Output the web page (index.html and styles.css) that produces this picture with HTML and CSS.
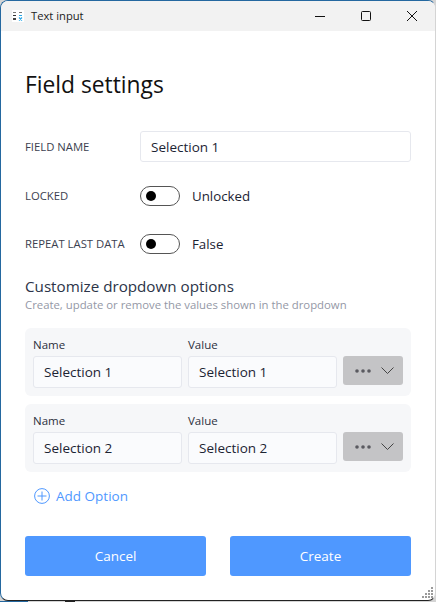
FILE: index.html
```html
<!DOCTYPE html>
<html lang="en">
<head>
  <meta charset="UTF-8">
  <title>Text input</title>
  <link rel="stylesheet" href="styles.css">
</head>
<body>
  <div class="window">

    <!-- Title bar -->
    <header class="titlebar">
      <svg class="app-icon" width="12" height="12" viewBox="0 0 12 12">
        <rect x="1" y="2" width="3" height="1" fill="#777"/>
        <rect x="7" y="2" width="3" height="1" fill="#777"/>
        <rect x="1" y="5" width="3" height="1" fill="#333"/>
        <rect x="7" y="5" width="3" height="1" fill="#29a8e8"/>
        <rect x="1" y="8" width="3" height="2" fill="#444"/>
        <path d="M7 7.5l3 3M10 7.5l-3 3" stroke="#29a8e8" stroke-width="1.2" fill="none"/>
      </svg>
      <span class="window-title">Text input</span>
      <div class="window-controls">
        <svg width="10" height="10" viewBox="0 0 10 10"><path d="M0 5.5h10" stroke="#111" fill="none"/></svg>
        <svg width="10" height="10" viewBox="0 0 10 10"><rect x="0.5" y="0.5" width="9" height="9" rx="1" stroke="#111" fill="none"/></svg>
        <svg width="10" height="10" viewBox="0 0 10 10"><path d="M0 0l10 10M10 0L0 10" stroke="#111" fill="none"/></svg>
      </div>
    </header>

    <main class="content">
      <h1>Field settings</h1>

      <div class="form-row name-row">
        <label class="form-label">FIELD NAME</label>
        <input class="text-field wide" type="text" value="Selection 1">
      </div>

      <div class="form-row locked-row">
        <label class="form-label">LOCKED</label>
        <span class="toggle"></span>
        <span class="toggle-text">Unlocked</span>
      </div>

      <div class="form-row repeat-row">
        <label class="form-label">REPEAT LAST DATA</label>
        <span class="toggle"></span>
        <span class="toggle-text">False</span>
      </div>

      <h2>Customize dropdown options</h2>
      <p class="hint">Create, update or remove the values shown in the dropdown</p>

      <div class="option-card">
        <div class="option-field">
          <label>Name</label>
          <input class="text-field" type="text" value="Selection 1">
        </div>
        <div class="option-field">
          <label>Value</label>
          <input class="text-field" type="text" value="Selection 1">
        </div>
        <button class="more-btn">
          <svg width="16" height="4" viewBox="0 0 16 4"><circle cx="2" cy="2" r="1.8"/><circle cx="8" cy="2" r="1.8"/><circle cx="14" cy="2" r="1.8"/></svg>
          <svg width="13" height="7" viewBox="0 0 13 7"><path d="M0.5 0.5l6 6 6-6" fill="none" stroke="#444" stroke-width="1"/></svg>
        </button>
      </div>

      <div class="option-card">
        <div class="option-field">
          <label>Name</label>
          <input class="text-field" type="text" value="Selection 2">
        </div>
        <div class="option-field">
          <label>Value</label>
          <input class="text-field" type="text" value="Selection 2">
        </div>
        <button class="more-btn">
          <svg width="16" height="4" viewBox="0 0 16 4"><circle cx="2" cy="2" r="1.8"/><circle cx="8" cy="2" r="1.8"/><circle cx="14" cy="2" r="1.8"/></svg>
          <svg width="13" height="7" viewBox="0 0 13 7"><path d="M0.5 0.5l6 6 6-6" fill="none" stroke="#444" stroke-width="1"/></svg>
        </button>
      </div>

      <div class="add-option">
        <svg width="16" height="16" viewBox="0 0 16 16"><circle cx="8" cy="8" r="7.4" fill="none" stroke="#4f98ff"/><path d="M8 3.5v9M3.5 8h9" stroke="#4f98ff" fill="none"/></svg>
        <span>Add Option</span>
      </div>

      <div class="actions">
        <button class="primary-btn">Cancel</button>
        <button class="primary-btn">Create</button>
      </div>
    </main>

    <!-- Resize grip -->
    <svg class="grip" width="11" height="11" viewBox="0 0 11 11" fill="#9a9a9a">
      <rect x="9" y="0" width="2" height="2"/>
      <rect x="6" y="3" width="2" height="2"/><rect x="9" y="3" width="2" height="2"/>
      <rect x="3" y="6" width="2" height="2"/><rect x="6" y="6" width="2" height="2"/><rect x="9" y="6" width="2" height="2"/>
      <rect x="0" y="9" width="2" height="2"/><rect x="3" y="9" width="2" height="2"/><rect x="6" y="9" width="2" height="2"/><rect x="9" y="9" width="2" height="2"/>
    </svg>
  </div>

  <!-- Sliver of the app behind the window -->
  <div class="behind">
    <span class="behind-blue"></span>
    <span class="behind-dark"></span>
  </div>
</body>
</html>
```

FILE: styles.css
```css
* {
  box-sizing: border-box;
}

html, body {
  margin: 0;
  padding: 0;
  height: 602px;
  overflow: hidden;
  background: #d4d4d4;
}

body {
  font-family: "Open Sans", "Noto Sans", sans-serif;
  color: #1c2433;
}

.window {
  position: relative;
  width: 436px;
  height: 601px;
  background: white;
  border-top: 1px solid #2468a0;
  border-left: 1px solid #2468a0;
  border-right: 1px solid #d4d4d4;
  border-bottom: 1px solid #222;
  border-radius: 8px;
  overflow: hidden;
}

.titlebar {
  display: flex;
  align-items: center;
  height: 30px;
  padding-left: 11px;
  background: #f2f2f2;
}

.app-icon {
  margin-right: 7px;
  background: white;
}

.window-title {
  margin-bottom: 1px;
  font-size: 11.2px;
  color: #222;
}

.window-controls {
  display: flex;
  align-items: center;
  gap: 36px;
  margin-left: auto;
  padding-right: 18px;
}

.content {
  padding: 0 24px;
}

h1 {
  margin: 38px 0 30px;
  font-size: 22.8px;
  line-height: 32px;
  font-weight: 400;
  color: #111;
}

.form-row {
  display: flex;
  align-items: center;
}

.name-row {
  height: 31px;
}

.locked-row {
  height: 20px;
  margin-top: 24px;
}

.repeat-row {
  height: 20px;
  margin-top: 28px;
}

.form-label {
  width: 115px;
  flex: none;
  font-size: 11.3px;
  color: #3c3f50;
}

.locked-row .form-label,
.repeat-row .form-label {
  margin-top: -2px;
}

.text-field {
  height: 32px;
  width: 100%;
  padding: 0 10px;
  border: 1px solid #e6e8ee;
  border-radius: 3px;
  background: #fafbfd;
  font-family: inherit;
  font-size: 13.5px;
  color: #1c2433;
}

.text-field.wide {
  flex: 1;
  height: 31px;
  background: white;
}

.toggle {
  position: relative;
  width: 40px;
  height: 20px;
  flex: none;
  border: 1px solid #555;
  border-radius: 10px;
  background: white;
}

.toggle::after {
  content: "";
  position: absolute;
  left: 5px;
  top: 4px;
  width: 10px;
  height: 10px;
  border-radius: 50%;
  background: black;
}

.toggle-text {
  margin-left: 12px;
  font-size: 13.3px;
  color: #1c2433;
}

h2 {
  margin: 22px 0 0;
  font-size: 15.2px;
  line-height: 20px;
  font-weight: 400;
  color: #2c3448;
}

.hint {
  margin: 1px 0 15px;
  font-size: 11.35px;
  line-height: 16px;
  color: #9498a6;
}

.option-card {
  display: flex;
  align-items: flex-end;
  gap: 6px;
  height: 68px;
  margin-bottom: 8px;
  padding: 8px;
  background: #f6f7f9;
  border-radius: 6px;
}

.option-field {
  width: 149px;
  flex: none;
}

.option-field label {
  display: block;
  margin-bottom: 3px;
  font-size: 11.5px;
  line-height: 17px;
  color: #2c3040;
}

.more-btn {
  display: flex;
  align-items: center;
  justify-content: center;
  gap: 10px;
  width: 60px;
  height: 29px;
  margin-bottom: 3px;
  padding: 0 0 0 3px;
  border: none;
  border-radius: 3px;
  background: #c4c4c6;
}

.more-btn svg {
  fill: #5a5a60;
}

.add-option {
  display: flex;
  align-items: center;
  gap: 6px;
  height: 24px;
  margin: 12px 0 28px 9px;
  font-size: 13.5px;
  color: #4f98ff;
}

.actions {
  display: flex;
  justify-content: space-between;
}

.primary-btn {
  width: 181px;
  height: 40px;
  border: none;
  border-radius: 3px;
  background: #4f98ff;
  font-family: inherit;
  font-size: 13.5px;
  color: white;
}

.grip {
  position: absolute;
  right: 2px;
  bottom: 2px;
}

.behind {
  display: flex;
  height: 1px;
}

.behind-blue {
  width: 28px;
  background: #2468a0;
}

.behind-dark {
  width: 10px;
  margin-left: 37px;
  background: #222;
}
```
